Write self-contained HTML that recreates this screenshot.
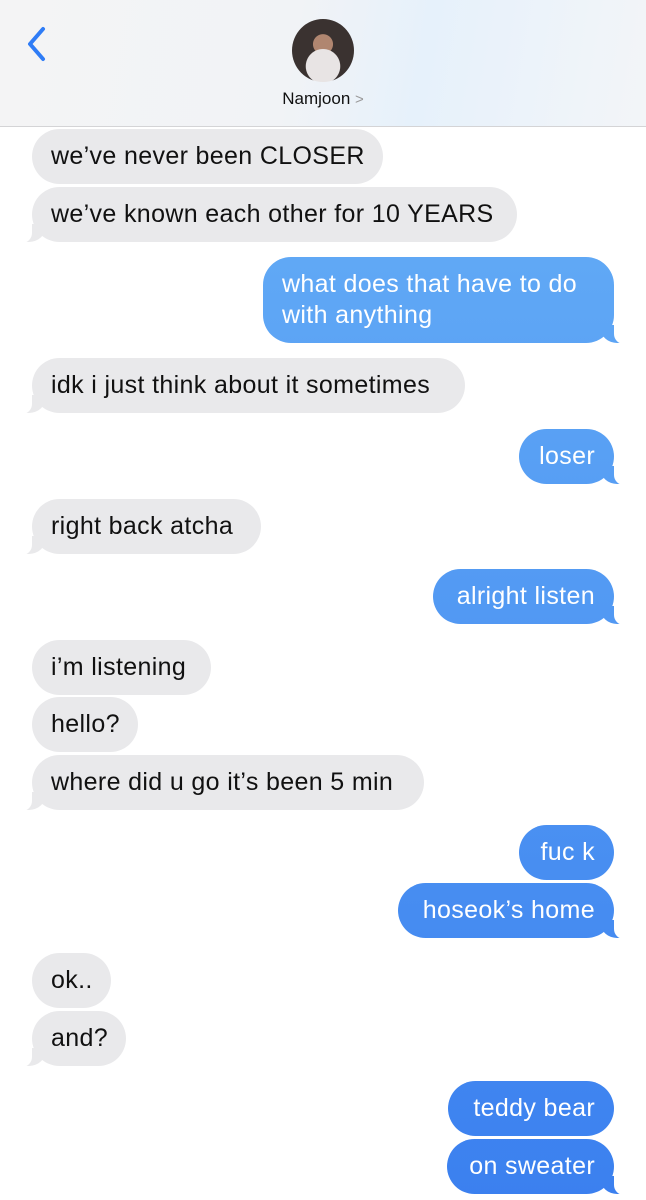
<!DOCTYPE html>
<html><head><meta charset="utf-8"><style>
*{margin:0;padding:0;box-sizing:border-box}
body{width:646px;height:1200px;background:#fff;position:relative;overflow:hidden;font-family:"Liberation Sans",sans-serif}
.hdr{position:absolute;left:0;top:0;width:646px;height:127px;background:linear-gradient(100deg,#f4f4f5 0%,#f1f3f6 45%,#e6f1fb 65%,#f3f5f8 100%);border-bottom:1px solid #d4d4d6}
.av{position:absolute;left:292px;top:19px;width:62px;height:63px;border-radius:50%;background:radial-gradient(circle at 50% 75%,#e8e4e4 0 30%,transparent 31%),radial-gradient(circle at 50% 40%,#b08670 0 20%,transparent 21%),#3a3230}
.nm{position:absolute;left:0;width:646px;top:89px;text-align:center;font-size:17px;color:#111}
.b{position:absolute;height:55px;border-radius:28px;font-size:25px;line-height:55px;padding:0 19px;white-space:nowrap;letter-spacing:0.35px}
.l{left:32px;background:#e9e9eb;color:#111}
.r{background:linear-gradient(#6ab3f7,#3b80ef);background-attachment:fixed;color:#fff;text-align:right}
.tl::before{content:"";position:absolute;left:-7px;bottom:0;width:20px;height:18px;background:#e9e9eb;border-bottom-right-radius:16px 14px}
.tl::after{content:"";position:absolute;left:-13px;bottom:-1px;width:13px;height:20px;background:#fff;border-bottom-right-radius:10px}
.tr::before{content:"";position:absolute;right:-7px;bottom:0;width:20px;height:18px;background:inherit;background-attachment:fixed;border-bottom-left-radius:16px 14px}
.tr::after{content:"";position:absolute;right:-13px;bottom:-1px;width:13px;height:20px;background:#fff;border-bottom-left-radius:10px}
</style></head><body>
<div class="hdr">
<svg style="position:absolute;left:24px;top:26px" width="26" height="36" viewBox="0 0 26 36"><path d="M19 3 L6 18 L19 33" fill="none" stroke="#2f7cf6" stroke-width="4" stroke-linecap="round" stroke-linejoin="round"/></svg>
<div class="av"></div>
<div class="nm">Namjoon <span style="color:#999;font-size:15px">&gt;</span></div>
</div>
<div class="b l" style="top:129px;width:351px">we’ve never been CLOSER</div>
<div class="b l tl" style="top:187px;width:485px">we’ve known each other for 10 YEARS</div>
<div class="b r tr" style="top:257px;left:263px;width:351px;height:86px;line-height:31px;padding-top:12px;text-align:left">what does that have to do<br>with anything</div>
<div class="b l tl" style="top:358px;width:433px">idk i just think about it sometimes</div>
<div class="b r tr" style="top:429px;left:519px;width:95px">loser</div>
<div class="b l tl" style="top:499px;width:229px">right back atcha</div>
<div class="b r tr" style="top:569px;left:433px;width:181px">alright listen</div>
<div class="b l" style="top:640px;width:179px">i’m listening</div>
<div class="b l" style="top:697px;width:106px">hello?</div>
<div class="b l tl" style="top:755px;width:392px">where did u go it’s been 5 min</div>
<div class="b r" style="top:825px;left:519px;width:95px">fuc k</div>
<div class="b r tr" style="top:883px;left:398px;width:216px">hoseok’s home</div>
<div class="b l" style="top:953px;width:79px">ok..</div>
<div class="b l tl" style="top:1011px;width:94px">and?</div>
<div class="b r" style="top:1081px;left:448px;width:166px">teddy bear</div>
<div class="b r tr" style="top:1139px;left:447px;width:167px">on sweater</div>
</body></html>
